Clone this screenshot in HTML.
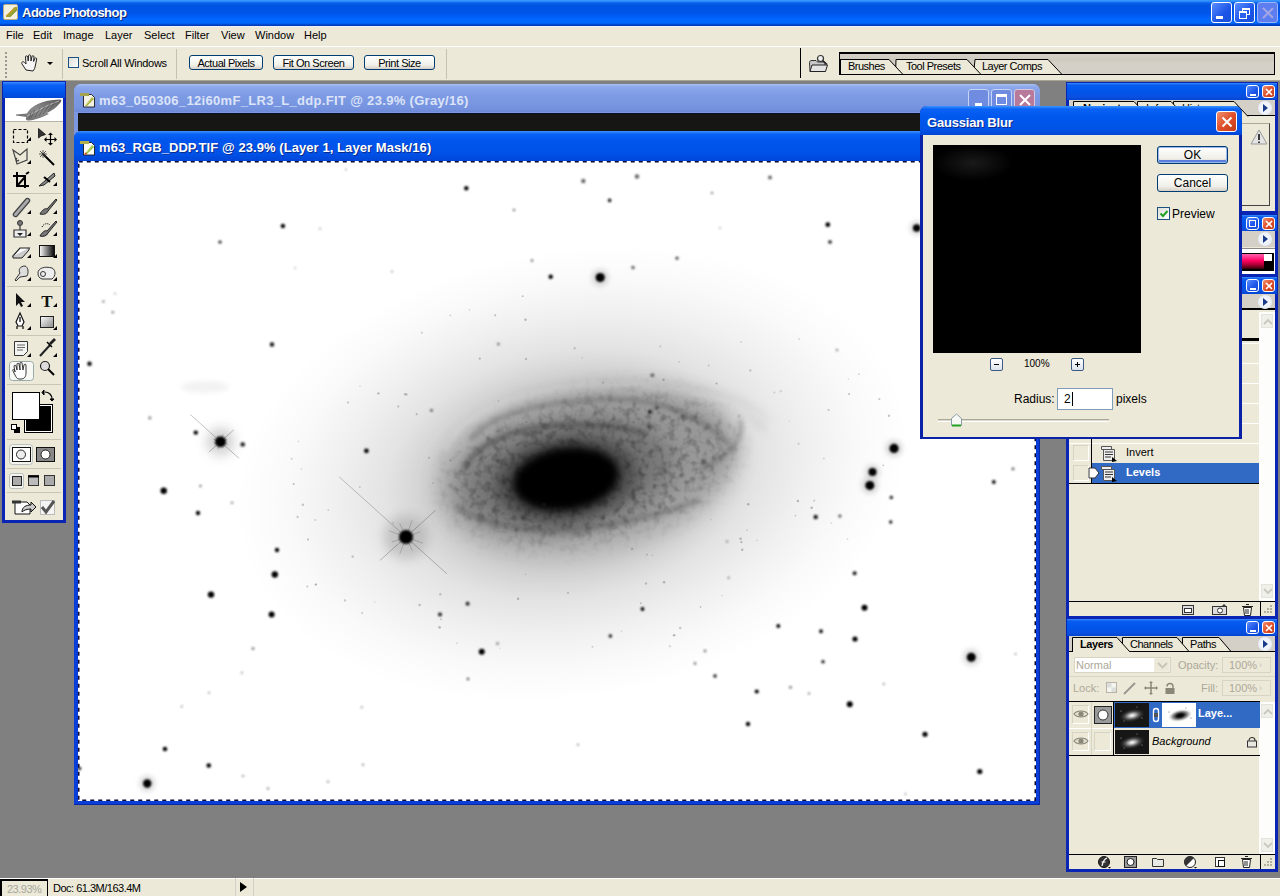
<!DOCTYPE html>
<html><head><meta charset="utf-8">
<style>
*{box-sizing:border-box}
html,body{margin:0;padding:0}
body{width:1280px;height:896px;overflow:hidden;background:#808080;position:relative;font-family:"Liberation Sans",sans-serif;font-size:11px;color:#000}
.a{position:absolute}
.tb{background:linear-gradient(#3d9dff 0,#2a86f8 1.5px,#0860e8 3px,#0054e3 6px,#0054e6 12px,#005cf4 16px,#0066ff 19px,#0068ff 23px,#0040c0 25px,#0038b0 26px)}
.menu span{position:absolute;top:29px}
.xbtn{position:absolute;border:1px solid #fff;border-radius:3px;background:linear-gradient(135deg,#5a8cff,#1b55e8 60%,#1a4fd8)}
.xclose{position:absolute;border:1px solid #fff;border-radius:3px;background:linear-gradient(135deg,#f09070,#e0502a 50%,#c03a18)}
.btn{position:absolute;border:1px solid #003c74;border-radius:3px;background:linear-gradient(#fff,#f0f0ea 70%,#d6d0c5);text-align:center;font-size:11px;line-height:14px;letter-spacing:-0.45px}
.ptitle{position:absolute;background:linear-gradient(#3b8cff 0,#0a5cf0 2px,#0055ea 8px,#0a4fe0 14px,#0046d0 17px)}
.tab{position:absolute;font-size:11px}
</style></head>
<body>
<!-- app title bar -->
<div class="a tb" style="left:0;top:0;width:1280px;height:26px"></div>
<div class="a" style="left:3px;top:4px;width:15px;height:16px;background:#f4f0e0;border-radius:2px;border:1px solid #b9b08a"></div>
<div class="a" style="left:6px;top:7px;width:11px;height:10px;background:linear-gradient(135deg,transparent 40%,#c9a12a 41%,#7ba13a 70%,transparent 71%)"></div>
<div class="a" style="left:22px;top:5px;font-weight:bold;font-size:13px;color:#fff;letter-spacing:-0.5px;text-shadow:1px 1px #0a246a">Adobe Photoshop</div>
<div class="xbtn" style="left:1211px;top:2px;width:21px;height:21px"><div class="a" style="left:4px;top:13px;width:7px;height:3px;background:#fff"></div></div>
<div class="xbtn" style="left:1234px;top:2px;width:21px;height:21px"><div class="a" style="left:7px;top:5px;width:8px;height:7px;border:1px solid #fff;border-top-width:2px"></div><div class="a" style="left:4px;top:8px;width:8px;height:8px;border:1px solid #fff;border-top-width:2px;background:#2a62ee"></div></div>
<div class="xbtn" style="left:1257px;top:2px;width:21px;height:21px;background:#5e7ef0;border-color:#9cb4f8"><div class="a" style="left:9px;top:3px;width:1.5px;height:14px;background:#a6a8e6;transform:rotate(45deg)"></div><div class="a" style="left:9px;top:3px;width:1.5px;height:14px;background:#a6a8e6;transform:rotate(-45deg)"></div></div>

<!-- menu bar -->
<div class="a" style="left:0;top:26px;width:1280px;height:21px;background:#ece9d8;border-bottom:1px solid #c4c1b4;border-top:1px solid #f0f0fa"></div>
<div class="a" style="left:0;top:46px;width:1280px;height:1px;background:#fff"></div>
<div class="menu">
<span style="left:6px">File</span><span style="left:33px">Edit</span><span style="left:63px">Image</span><span style="left:105px">Layer</span><span style="left:144px">Select</span><span style="left:185px">Filter</span><span style="left:221px">View</span><span style="left:255px">Window</span><span style="left:304px">Help</span>
</div>

<!-- options bar -->
<div class="a" style="left:0;top:47px;width:1280px;height:34px;background:#ece9d8;border-bottom:1px solid #a9a595"></div>
<svg class="a" style="left:4px;top:51px" width="6" height="28"><g fill="#9a9890"><rect x="1" y="1" width="2" height="2"/><rect x="1" y="5" width="2" height="2"/><rect x="1" y="9" width="2" height="2"/><rect x="1" y="13" width="2" height="2"/><rect x="1" y="17" width="2" height="2"/><rect x="1" y="21" width="2" height="2"/><rect x="1" y="25" width="2" height="2"/></g></svg>
<svg class="a" style="left:20px;top:54px" width="20" height="18" viewBox="0 0 20 18"><path d="M6 16 L2 10 C1 8 3 7 4.5 8.5 L6 10 L5.5 3 C5.5 1.5 7.5 1.5 7.8 3 L8.2 7 L8.5 1.8 C8.6 0.5 10.6 0.5 10.7 1.8 L11 7 L12 2.5 C12.3 1.2 14.2 1.5 14 3 L13.6 7.5 L14.8 4.5 C15.2 3.4 16.9 3.8 16.7 5 L15.5 11 C15 14 14 16 13 17 Z" fill="#f4f4f4" stroke="#222" stroke-width="1"/></svg>
<svg class="a" style="left:808px;top:54px" width="22" height="20" viewBox="0 0 22 20"><path d="M1.5 8.5 C1.5 7 2.5 6.5 4 6.5 H8 L9.5 8 H17 V17.5 H2 Z" fill="#c8c8c8" stroke="#333"/><path d="M2 17.5 L4 11 H19.5 L17.5 17.5 Z" fill="#e4e4e4" stroke="#222"/><circle cx="12.5" cy="4.5" r="3" fill="#eee" stroke="#333" stroke-width="1.2"/><path d="M14.5 6.5 L19 10.5" stroke="#222" stroke-width="1.6"/></svg>
<div class="a" style="left:62px;top:49px;width:1px;height:30px;background:#c5c2b2"></div>
<div class="a" style="left:176px;top:49px;width:1px;height:30px;background:#c5c2b2"></div>
<div class="a" style="left:446px;top:49px;width:1px;height:30px;background:#c5c2b2"></div>
<div class="a" style="left:800px;top:48px;width:1px;height:30px;background:#000"></div>
<div class="a" style="left:68px;top:57px;width:11px;height:11px;border:1px solid #1c5180;background:linear-gradient(135deg,#dcdcd7,#fff)"></div>
<div class="a" style="left:82px;top:57px;letter-spacing:-0.28px">Scroll All Windows</div>
<div class="btn" style="left:189px;top:55px;width:74px;height:15px">Actual Pixels</div>
<div class="btn" style="left:273px;top:55px;width:81px;height:15px">Fit On Screen</div>
<div class="btn" style="left:364px;top:55px;width:71px;height:15px">Print Size</div>
<div class="a" style="left:47px;top:62px;width:0;height:0;border-left:3px solid transparent;border-right:3px solid transparent;border-top:3px solid #000"></div>

<!-- palette well -->
<div class="a" style="left:839px;top:52px;width:436px;height:23px;background:linear-gradient(#d4d0c8,#cdc9bd 6px,#d4d0c8 8px);border:1px solid #000;border-top-width:2px"></div>
<svg class="a" style="left:838px;top:58px" width="230" height="18" viewBox="838 58 230 18">
<path d="M973.5 74.5 L975 59.5 H1048 L1062 74.5" fill="#ece9d8" stroke="#000"/>
<path d="M895.5 74.5 L896 59.5 H967 L981 74.5" fill="#ece9d8" stroke="#000"/>
<path d="M839.5 74.5 V59.5 H889 L903 74.5" fill="#ece9d8" stroke="#000"/>
<path d="M839.5 74.5 H1062" stroke="#000"/>
<path d="M840 59 V75" stroke="#000" stroke-width="2"/>
</svg>
<div class="a" style="left:848px;top:60px;letter-spacing:-0.5px">Brushes</div>
<div class="a" style="left:906px;top:60px;letter-spacing:-0.5px">Tool Presets</div>
<div class="a" style="left:982px;top:60px;letter-spacing:-0.5px">Layer Comps</div>

<!-- status bar -->
<div class="a" style="left:0;top:878px;width:1280px;height:18px;background:#ece9d8;border-top:1px solid #fff"></div>
<div class="a" style="left:0;top:879px;width:48px;height:17px;border:2px solid #000;border-bottom:0;border-right-width:1px;color:#a7a59a;padding:2px 0 0 5px;font-size:11px;letter-spacing:-0.5px">23.93%</div>
<div class="a" style="left:53px;top:882px;letter-spacing:-0.5px">Doc: 61.3M/163.4M</div>
<div class="a" style="left:235px;top:878px;width:1px;height:18px;background:#d4d0c8"></div>
<div class="a" style="left:253px;top:878px;width:1px;height:18px;background:#d4d0c8"></div>
<div class="a" style="left:240px;top:882px;width:0;height:0;border-top:5px solid transparent;border-bottom:5px solid transparent;border-left:7px solid #000"></div>



<!-- doc window 1 inactive -->
<div class="a" style="left:74px;top:84px;width:966px;height:60px;background:#7b97e0;border-radius:7px 7px 0 0"></div>
<div class="a" style="left:74px;top:84px;width:966px;height:28px;border-radius:7px 7px 0 0;background:linear-gradient(#a9c0f0 0,#8ba8ec 3px,#7d9ae4 12px,#7693e0 24px,#6f8bd8 28px)"></div>
<div class="a" style="left:78px;top:113px;width:958px;height:18px;background:#161614;border-top:1px solid #08102a"></div>
<svg class="a" style="left:80px;top:91px" width="16" height="17" viewBox="0 0 16 17"><path d="M3.5 3.5h8l3 3v9.5h-11z" fill="#f4f2e4" stroke="#1a1a20" stroke-width="0.9"/><path d="M0 2h9v3h-9z" fill="#a4a450"/><path d="M5 15 L12 6 L14 8 L7 15z" fill="#a8b040"/><path d="M6 14 L12.5 7" stroke="#c8d060" stroke-width="0.8"/></svg>
<div class="a" style="left:99px;top:93px;font-weight:bold;font-size:13px;color:#dce4f8;letter-spacing:0.32px">m63_050306_12i60mF_LR3_L_ddp.FIT @ 23.9% (Gray/16)</div>
<div class="a" style="left:968px;top:89px;width:21px;height:21px;border:1px solid #c8d4f4;border-radius:3px;background:#6f8ce0"><div class="a" style="left:6px;top:13px;width:7px;height:3px;background:#fff"></div></div>
<div class="a" style="left:991px;top:89px;width:21px;height:21px;border:1px solid #c8d4f4;border-radius:3px;background:#6f8ce0"><div class="a" style="left:4px;top:4px;width:11px;height:11px;border:1.5px solid #fff;border-top-width:3px"></div></div>
<div class="a" style="left:1014px;top:89px;width:21px;height:21px;border:1px solid #d8c8e0;border-radius:3px;background:#b87a9a"><svg class="a" style="left:3px;top:3px" width="14" height="14"><path d="M2 2L12 12M12 2L2 12" stroke="#fff" stroke-width="2"/></svg></div>

<!-- doc window 2 active -->
<div class="a" style="left:74px;top:131px;width:966px;height:674px;background:#0a3ed8;border-radius:7px 7px 0 0;box-shadow:inset -1px -1px 0 #0628a0"></div>
<div class="a" style="left:74px;top:131px;width:966px;height:30px;border-radius:7px 7px 0 0;background:linear-gradient(#3d95ff 0,#0a62f5 3px,#0055ec 10px,#0052e8 22px,#0046d8 30px)"></div>
<svg class="a" style="left:80px;top:139px" width="16" height="17" viewBox="0 0 16 17"><path d="M3.5 3.5h8l3 3v9.5h-11z" fill="#fafaf4" stroke="#1a1a20" stroke-width="0.9"/><path d="M0 2h9v3h-9z" fill="#b0b050"/><path d="M5 15 L12 6 L14 8 L7 15z" fill="#8cc040"/><path d="M6 14 L12.5 7" stroke="#d0e070" stroke-width="0.8"/><path d="M4 15.5 L6 13 L7 15.5z" fill="#e04020"/></svg>
<div class="a" style="left:99px;top:140px;font-weight:bold;font-size:13px;color:#fff;letter-spacing:0.07px;text-shadow:1px 1px #0a2a8a">m63_RGB_DDP.TIF @ 23.9% (Layer 1, Layer Mask/16)</div>
<div id="canvas" class="a" style="left:78px;top:161px;width:958px;height:640px;background:#fff;overflow:hidden"></div>
<!--GALAXY-->
<svg class="a" style="left:78px;top:161px" width="958" height="640" viewBox="78 161 958 640">
<defs>
<filter id="b50" x="-50%" y="-50%" width="200%" height="200%"><feGaussianBlur stdDeviation="45"/></filter>
<filter id="b25" x="-50%" y="-50%" width="200%" height="200%"><feGaussianBlur stdDeviation="22"/></filter>
<filter id="b12" x="-50%" y="-50%" width="200%" height="200%"><feGaussianBlur stdDeviation="11"/></filter>
<filter id="b6" x="-50%" y="-50%" width="200%" height="200%"><feGaussianBlur stdDeviation="6"/></filter>
<filter id="b4" x="-50%" y="-50%" width="200%" height="200%"><feGaussianBlur stdDeviation="4"/></filter>
<filter id="b3" x="-50%" y="-50%" width="200%" height="200%"><feGaussianBlur stdDeviation="2.5"/></filter>
<filter id="b1" x="-50%" y="-50%" width="200%" height="200%"><feGaussianBlur stdDeviation="0.9"/></filter>
<filter id="bs" x="-100%" y="-100%" width="300%" height="300%"><feGaussianBlur stdDeviation="0.7"/></filter>
</defs>
<defs><radialGradient id="halo" cx="0.5" cy="0.5" r="0.5">
<stop offset="0" stop-color="#000" stop-opacity="0.32"/>
<stop offset="0.4" stop-color="#000" stop-opacity="0.2"/>
<stop offset="0.55" stop-color="#000" stop-opacity="0.11"/>
<stop offset="0.7" stop-color="#000" stop-opacity="0.06"/>
<stop offset="0.85" stop-color="#000" stop-opacity="0.022"/>
<stop offset="1" stop-color="#000" stop-opacity="0"/>
</radialGradient></defs>
<ellipse cx="572" cy="474" rx="340" ry="225" transform="rotate(-10 572 474)" fill="url(#halo)"/>
<ellipse cx="205" cy="387" rx="24" ry="6" fill="#f2f2f2" filter="url(#b3)"/>
<ellipse cx="588" cy="470" rx="150" ry="82" transform="rotate(-11 588 470)" fill="#b0b0b0" filter="url(#b12)"/>
<ellipse cx="590" cy="466" rx="145" ry="66" transform="rotate(-11 590 466)" fill="#989898" filter="url(#b12)"/>
<ellipse cx="568" cy="475" rx="105" ry="54" transform="rotate(-10 568 475)" fill="#747474" filter="url(#b12)"/>
<ellipse cx="566" cy="479" rx="72" ry="44" transform="rotate(-8 568 477)" fill="#333" opacity="0.55" filter="url(#b6)"/>
<defs><filter id="turb" x="0" y="0" width="100%" height="100%"><feTurbulence type="fractalNoise" baseFrequency="0.13" numOctaves="2" seed="3"/><feColorMatrix type="matrix" values="0 0 0 0 0  0 0 0 0 0  0 0 0 0 0  1.8 0 0 0 -0.8"/></filter>
<filter id="mb" x="-50%" y="-50%" width="200%" height="200%"><feGaussianBlur stdDeviation="14"/></filter>
<mask id="dm"><ellipse cx="590" cy="468" rx="145" ry="70" transform="rotate(-11 590 466)" fill="#fff" filter="url(#mb)"/></mask></defs>
<g mask="url(#dm)" opacity="0.38"><rect x="420" y="370" width="340" height="200" filter="url(#turb)"/></g>
<ellipse cx="566" cy="479" rx="54" ry="32" transform="rotate(-8 566 479)" fill="#000" filter="url(#b4)"/>
<path d="M 440 470 C 455 415 560 385 660 388 C 725 392 760 410 765 430" fill="none" stroke="#aaa" stroke-width="10" opacity="0.35" filter="url(#b6)"/>
<path d="M 464 471 C 470 450 505 430 542 427 C 580 422 620 425 646 434" fill="none" stroke="#2a2a2a" stroke-width="5" opacity="0.45" filter="url(#b3)"/>
<path d="M 470 440 C 490 415 540 400 614 399 C 660 399 700 415 730 445" fill="none" stroke="#333" stroke-width="4" opacity="0.35" filter="url(#b3)"/>
<path d="M 455 505 C 480 525 530 532 567 530 C 610 527 660 515 700 500" fill="none" stroke="#3a3a3a" stroke-width="5" opacity="0.35" filter="url(#b3)"/>
<path d="M 445 450 C 470 400 560 380 640 385 C 700 390 750 405 775 430" fill="none" stroke="#fff" stroke-width="5" opacity="0.18" filter="url(#b3)"/>
<path d="M 700 470 C 730 455 745 440 740 420" fill="none" stroke="#333" stroke-width="4" opacity="0.3" filter="url(#b3)"/>
<circle cx="560.4" cy="507.7" r="1.8" fill="#222" opacity="0.28" filter="url(#b1)"/>
<circle cx="496.5" cy="474.3" r="1.1" fill="#222" opacity="0.43" filter="url(#b1)"/>
<circle cx="688.0" cy="461.9" r="1.1" fill="#222" opacity="0.28" filter="url(#b1)"/>
<circle cx="482.7" cy="514.9" r="1.1" fill="#222" opacity="0.33" filter="url(#b1)"/>
<circle cx="488.5" cy="439.0" r="1.7" fill="#222" opacity="0.39" filter="url(#b1)"/>
<circle cx="660.5" cy="450.4" r="2.0" fill="#222" opacity="0.35" filter="url(#b1)"/>
<circle cx="642.6" cy="488.2" r="1.4" fill="#222" opacity="0.54" filter="url(#b1)"/>
<circle cx="644.2" cy="506.5" r="1.8" fill="#222" opacity="0.38" filter="url(#b1)"/>
<circle cx="518.2" cy="470.1" r="1.1" fill="#222" opacity="0.32" filter="url(#b1)"/>
<circle cx="540.9" cy="433.3" r="1.4" fill="#222" opacity="0.45" filter="url(#b1)"/>
<circle cx="506.4" cy="495.4" r="2.0" fill="#222" opacity="0.49" filter="url(#b1)"/>
<circle cx="603.0" cy="518.4" r="1.6" fill="#222" opacity="0.56" filter="url(#b1)"/>
<circle cx="571.2" cy="428.5" r="2.2" fill="#222" opacity="0.29" filter="url(#b1)"/>
<circle cx="489.5" cy="514.7" r="1.2" fill="#222" opacity="0.42" filter="url(#b1)"/>
<circle cx="703.9" cy="461.6" r="1.9" fill="#222" opacity="0.45" filter="url(#b1)"/>
<circle cx="648.9" cy="426.6" r="1.8" fill="#222" opacity="0.46" filter="url(#b1)"/>
<circle cx="498.0" cy="460.7" r="2.0" fill="#222" opacity="0.58" filter="url(#b1)"/>
<circle cx="478.3" cy="496.7" r="1.1" fill="#222" opacity="0.50" filter="url(#b1)"/>
<circle cx="498.1" cy="430.9" r="2.0" fill="#222" opacity="0.35" filter="url(#b1)"/>
<circle cx="509.6" cy="518.9" r="1.0" fill="#222" opacity="0.41" filter="url(#b1)"/>
<circle cx="633.5" cy="492.9" r="1.1" fill="#222" opacity="0.52" filter="url(#b1)"/>
<circle cx="654.3" cy="487.0" r="1.5" fill="#222" opacity="0.55" filter="url(#b1)"/>
<circle cx="681.4" cy="475.4" r="1.7" fill="#222" opacity="0.56" filter="url(#b1)"/>
<circle cx="634.5" cy="403.5" r="1.3" fill="#222" opacity="0.40" filter="url(#b1)"/>
<circle cx="516.4" cy="529.9" r="2.1" fill="#222" opacity="0.30" filter="url(#b1)"/>
<circle cx="634.3" cy="497.1" r="1.3" fill="#222" opacity="0.42" filter="url(#b1)"/>
<circle cx="512.4" cy="459.2" r="1.0" fill="#222" opacity="0.40" filter="url(#b1)"/>
<circle cx="523.0" cy="518.2" r="2.1" fill="#222" opacity="0.49" filter="url(#b1)"/>
<circle cx="478.1" cy="482.5" r="1.8" fill="#222" opacity="0.27" filter="url(#b1)"/>
<circle cx="683.0" cy="416.4" r="2.0" fill="#222" opacity="0.53" filter="url(#b1)"/>
<circle cx="519.8" cy="509.7" r="1.1" fill="#222" opacity="0.47" filter="url(#b1)"/>
<circle cx="660.4" cy="469.2" r="1.3" fill="#222" opacity="0.31" filter="url(#b1)"/>
<circle cx="556.2" cy="503.7" r="1.0" fill="#222" opacity="0.30" filter="url(#b1)"/>
<circle cx="670.2" cy="481.1" r="1.0" fill="#222" opacity="0.56" filter="url(#b1)"/>
<circle cx="526.0" cy="454.0" r="1.3" fill="#222" opacity="0.37" filter="url(#b1)"/>
<circle cx="544.0" cy="504.5" r="2.0" fill="#222" opacity="0.60" filter="url(#b1)"/>
<circle cx="491.8" cy="495.9" r="1.1" fill="#222" opacity="0.29" filter="url(#b1)"/>
<circle cx="548.1" cy="510.8" r="2.0" fill="#222" opacity="0.31" filter="url(#b1)"/>
<circle cx="724.7" cy="453.7" r="1.6" fill="#222" opacity="0.30" filter="url(#b1)"/>
<circle cx="520.2" cy="471.1" r="1.6" fill="#222" opacity="0.59" filter="url(#b1)"/>
<circle cx="659.0" cy="412.8" r="1.3" fill="#222" opacity="0.38" filter="url(#b1)"/>
<circle cx="659.6" cy="507.2" r="1.6" fill="#222" opacity="0.52" filter="url(#b1)"/>
<circle cx="555.7" cy="510.0" r="2.0" fill="#222" opacity="0.59" filter="url(#b1)"/>
<circle cx="656.6" cy="407.9" r="2.0" fill="#222" opacity="0.51" filter="url(#b1)"/>
<circle cx="613.8" cy="514.1" r="1.4" fill="#222" opacity="0.26" filter="url(#b1)"/>
<circle cx="352.7" cy="556.6" r="1.3" fill="#555" opacity="0.27" filter="url(#bs)"/>
<circle cx="328.3" cy="510.1" r="0.9" fill="#555" opacity="0.28" filter="url(#bs)"/>
<circle cx="360.0" cy="386.0" r="0.8" fill="#555" opacity="0.23" filter="url(#bs)"/>
<circle cx="831.3" cy="523.0" r="1.1" fill="#555" opacity="0.16" filter="url(#bs)"/>
<circle cx="879.3" cy="399.2" r="1.1" fill="#555" opacity="0.30" filter="url(#bs)"/>
<circle cx="625.8" cy="505.9" r="1.1" fill="#555" opacity="0.16" filter="url(#bs)"/>
<circle cx="652.4" cy="555.3" r="0.8" fill="#555" opacity="0.27" filter="url(#bs)"/>
<circle cx="315.6" cy="584.7" r="1.1" fill="#555" opacity="0.31" filter="url(#bs)"/>
<circle cx="315.3" cy="520.0" r="1.0" fill="#555" opacity="0.22" filter="url(#bs)"/>
<circle cx="889.0" cy="415.8" r="1.2" fill="#555" opacity="0.33" filter="url(#bs)"/>
<circle cx="525.6" cy="574.3" r="0.9" fill="#555" opacity="0.17" filter="url(#bs)"/>
<circle cx="574.6" cy="348.2" r="1.2" fill="#555" opacity="0.25" filter="url(#bs)"/>
<circle cx="848.4" cy="379.3" r="0.8" fill="#555" opacity="0.20" filter="url(#bs)"/>
<circle cx="750.3" cy="370.5" r="1.3" fill="#555" opacity="0.25" filter="url(#bs)"/>
<circle cx="814.2" cy="500.6" r="1.2" fill="#555" opacity="0.22" filter="url(#bs)"/>
<circle cx="748.2" cy="504.2" r="1.3" fill="#555" opacity="0.34" filter="url(#bs)"/>
<circle cx="710.8" cy="519.5" r="0.9" fill="#555" opacity="0.16" filter="url(#bs)"/>
<circle cx="603.2" cy="382.7" r="1.1" fill="#555" opacity="0.26" filter="url(#bs)"/>
<circle cx="700.6" cy="607.0" r="0.9" fill="#555" opacity="0.31" filter="url(#bs)"/>
<circle cx="747.0" cy="530.2" r="0.9" fill="#555" opacity="0.22" filter="url(#bs)"/>
<circle cx="849.1" cy="394.1" r="1.0" fill="#555" opacity="0.37" filter="url(#bs)"/>
<circle cx="646.0" cy="583.4" r="1.2" fill="#555" opacity="0.31" filter="url(#bs)"/>
<circle cx="847.6" cy="539.1" r="0.9" fill="#555" opacity="0.21" filter="url(#bs)"/>
<circle cx="582.3" cy="357.7" r="0.9" fill="#555" opacity="0.17" filter="url(#bs)"/>
<circle cx="795.4" cy="515.6" r="0.9" fill="#555" opacity="0.30" filter="url(#bs)"/>
<circle cx="440.3" cy="594.3" r="1.3" fill="#555" opacity="0.27" filter="url(#bs)"/>
<circle cx="298.3" cy="441.4" r="0.9" fill="#555" opacity="0.19" filter="url(#bs)"/>
<circle cx="799.1" cy="339.0" r="0.9" fill="#555" opacity="0.20" filter="url(#bs)"/>
<circle cx="522.7" cy="296.2" r="0.9" fill="#555" opacity="0.39" filter="url(#bs)"/>
<circle cx="741.1" cy="342.0" r="1.0" fill="#555" opacity="0.18" filter="url(#bs)"/>
<circle cx="883.2" cy="465.3" r="0.9" fill="#555" opacity="0.33" filter="url(#bs)"/>
<circle cx="592.5" cy="646.8" r="1.1" fill="#555" opacity="0.22" filter="url(#bs)"/>
<circle cx="722.2" cy="595.6" r="0.8" fill="#555" opacity="0.21" filter="url(#bs)"/>
<circle cx="291.7" cy="458.8" r="1.1" fill="#555" opacity="0.22" filter="url(#bs)"/>
<circle cx="702.0" cy="404.3" r="0.8" fill="#555" opacity="0.22" filter="url(#bs)"/>
<circle cx="481.3" cy="511.7" r="0.9" fill="#555" opacity="0.24" filter="url(#bs)"/>
<circle cx="450.4" cy="460.6" r="1.0" fill="#555" opacity="0.37" filter="url(#bs)"/>
<circle cx="828.5" cy="409.9" r="1.1" fill="#555" opacity="0.30" filter="url(#bs)"/>
<circle cx="640.2" cy="505.5" r="0.8" fill="#555" opacity="0.38" filter="url(#bs)"/>
<circle cx="450.3" cy="315.4" r="0.8" fill="#555" opacity="0.31" filter="url(#bs)"/>
<circle cx="308.0" cy="539.6" r="1.0" fill="#555" opacity="0.40" filter="url(#bs)"/>
<circle cx="797.9" cy="501.0" r="1.2" fill="#555" opacity="0.38" filter="url(#bs)"/>
<circle cx="525.5" cy="319.7" r="1.2" fill="#555" opacity="0.38" filter="url(#bs)"/>
<circle cx="439.6" cy="627.4" r="1.3" fill="#555" opacity="0.37" filter="url(#bs)"/>
<circle cx="345.0" cy="600.4" r="1.2" fill="#555" opacity="0.29" filter="url(#bs)"/>
<circle cx="416.7" cy="414.2" r="1.1" fill="#555" opacity="0.30" filter="url(#bs)"/>
<circle cx="811.7" cy="507.8" r="1.3" fill="#555" opacity="0.37" filter="url(#bs)"/>
<circle cx="526.0" cy="358.9" r="1.2" fill="#555" opacity="0.30" filter="url(#bs)"/>
<circle cx="316.2" cy="584.4" r="0.8" fill="#555" opacity="0.34" filter="url(#bs)"/>
<circle cx="823.9" cy="458.4" r="1.0" fill="#555" opacity="0.21" filter="url(#bs)"/>
<circle cx="479.8" cy="358.6" r="1.1" fill="#555" opacity="0.38" filter="url(#bs)"/>
<circle cx="580.3" cy="520.6" r="1.0" fill="#555" opacity="0.32" filter="url(#bs)"/>
<circle cx="632.0" cy="548.7" r="1.3" fill="#555" opacity="0.31" filter="url(#bs)"/>
<circle cx="307.3" cy="586.4" r="1.0" fill="#555" opacity="0.32" filter="url(#bs)"/>
<circle cx="664.1" cy="582.3" r="1.2" fill="#555" opacity="0.38" filter="url(#bs)"/>
<circle cx="708.7" cy="365.5" r="1.1" fill="#555" opacity="0.23" filter="url(#bs)"/>
<circle cx="742.2" cy="549.7" r="1.2" fill="#555" opacity="0.36" filter="url(#bs)"/>
<circle cx="469.5" cy="309.9" r="0.9" fill="#555" opacity="0.19" filter="url(#bs)"/>
<circle cx="413.1" cy="535.4" r="0.9" fill="#555" opacity="0.25" filter="url(#bs)"/>
<circle cx="398.3" cy="406.4" r="1.0" fill="#555" opacity="0.36" filter="url(#bs)"/>
<circle cx="789.3" cy="421.2" r="0.8" fill="#555" opacity="0.16" filter="url(#bs)"/>
<circle cx="633.6" cy="422.3" r="1.2" fill="#555" opacity="0.29" filter="url(#bs)"/>
<circle cx="500.2" cy="648.2" r="0.8" fill="#555" opacity="0.18" filter="url(#bs)"/>
<circle cx="495.5" cy="502.7" r="1.2" fill="#555" opacity="0.21" filter="url(#bs)"/>
<circle cx="644.2" cy="507.7" r="1.1" fill="#555" opacity="0.26" filter="url(#bs)"/>
<circle cx="378.4" cy="393.4" r="1.2" fill="#555" opacity="0.39" filter="url(#bs)"/>
<circle cx="498.5" cy="401.0" r="1.0" fill="#555" opacity="0.19" filter="url(#bs)"/>
<circle cx="798.6" cy="443.8" r="1.2" fill="#555" opacity="0.19" filter="url(#bs)"/>
<circle cx="568.0" cy="592.8" r="1.1" fill="#555" opacity="0.28" filter="url(#bs)"/>
<circle cx="348.1" cy="402.6" r="1.0" fill="#555" opacity="0.35" filter="url(#bs)"/>
<circle cx="663.8" cy="419.3" r="1.3" fill="#555" opacity="0.33" filter="url(#bs)"/>
<circle cx="741.4" cy="542.1" r="1.1" fill="#555" opacity="0.38" filter="url(#bs)"/>
<circle cx="419.6" cy="605.0" r="1.2" fill="#555" opacity="0.35" filter="url(#bs)"/>
<circle cx="774.4" cy="392.5" r="1.1" fill="#555" opacity="0.20" filter="url(#bs)"/>
<circle cx="495.2" cy="315.3" r="1.1" fill="#555" opacity="0.33" filter="url(#bs)"/>
<circle cx="674.1" cy="635.2" r="1.3" fill="#555" opacity="0.39" filter="url(#bs)"/>
<circle cx="293.7" cy="483.9" r="1.0" fill="#555" opacity="0.38" filter="url(#bs)"/>
<circle cx="679.0" cy="361.9" r="0.8" fill="#555" opacity="0.26" filter="url(#bs)"/>
<circle cx="301.4" cy="469.3" r="1.0" fill="#555" opacity="0.16" filter="url(#bs)"/>
<circle cx="602.9" cy="409.2" r="1.2" fill="#555" opacity="0.19" filter="url(#bs)"/>
<circle cx="457.0" cy="643.2" r="0.9" fill="#555" opacity="0.19" filter="url(#bs)"/>
<circle cx="302.9" cy="504.8" r="1.2" fill="#555" opacity="0.32" filter="url(#bs)"/>
<circle cx="780.8" cy="391.3" r="1.3" fill="#555" opacity="0.17" filter="url(#bs)"/>
<circle cx="640.8" cy="603.2" r="0.9" fill="#555" opacity="0.33" filter="url(#bs)"/>
<circle cx="406.5" cy="394.4" r="1.2" fill="#555" opacity="0.29" filter="url(#bs)"/>
<circle cx="518.1" cy="598.7" r="1.2" fill="#555" opacity="0.38" filter="url(#bs)"/>
<circle cx="680.2" cy="628.1" r="1.3" fill="#555" opacity="0.28" filter="url(#bs)"/>
<circle cx="429.1" cy="457.8" r="1.1" fill="#555" opacity="0.28" filter="url(#bs)"/>
<circle cx="500.7" cy="454.4" r="1.3" fill="#555" opacity="0.28" filter="url(#bs)"/>
<circle cx="362.2" cy="613.1" r="1.1" fill="#555" opacity="0.27" filter="url(#bs)"/>
<circle cx="526.4" cy="422.2" r="1.1" fill="#555" opacity="0.25" filter="url(#bs)"/>
<circle cx="858.9" cy="374.2" r="0.9" fill="#555" opacity="0.27" filter="url(#bs)"/>
<circle cx="740.6" cy="538.7" r="1.2" fill="#555" opacity="0.38" filter="url(#bs)"/>
<circle cx="393.1" cy="522.9" r="0.9" fill="#555" opacity="0.30" filter="url(#bs)"/>
<circle cx="685.7" cy="418.2" r="1.2" fill="#555" opacity="0.16" filter="url(#bs)"/>
<circle cx="646.9" cy="554.7" r="1.1" fill="#555" opacity="0.23" filter="url(#bs)"/>
<circle cx="441.0" cy="619.3" r="0.9" fill="#555" opacity="0.33" filter="url(#bs)"/>
<circle cx="757.1" cy="540.3" r="0.9" fill="#555" opacity="0.20" filter="url(#bs)"/>
<circle cx="359.8" cy="487.0" r="1.0" fill="#555" opacity="0.25" filter="url(#bs)"/>
<circle cx="433.1" cy="483.1" r="0.9" fill="#555" opacity="0.31" filter="url(#bs)"/>
<circle cx="405.1" cy="394.3" r="1.2" fill="#555" opacity="0.30" filter="url(#bs)"/>
<circle cx="663.5" cy="379.7" r="1.2" fill="#555" opacity="0.35" filter="url(#bs)"/>
<circle cx="716.5" cy="383.5" r="1.0" fill="#555" opacity="0.38" filter="url(#bs)"/>
<circle cx="669.9" cy="646.2" r="1.2" fill="#555" opacity="0.18" filter="url(#bs)"/>
<circle cx="621.5" cy="631.4" r="0.9" fill="#555" opacity="0.17" filter="url(#bs)"/>
<circle cx="660.2" cy="346.4" r="1.2" fill="#555" opacity="0.18" filter="url(#bs)"/>
<circle cx="374.7" cy="602.0" r="0.8" fill="#555" opacity="0.20" filter="url(#bs)"/>
<circle cx="421.9" cy="332.8" r="1.3" fill="#555" opacity="0.18" filter="url(#bs)"/>
<circle cx="297.6" cy="516.9" r="1.1" fill="#555" opacity="0.32" filter="url(#bs)"/>
<circle cx="625.8" cy="526.3" r="0.9" fill="#555" opacity="0.16" filter="url(#bs)"/>
<defs><filter id="b2" x="-50%" y="-50%" width="200%" height="200%"><feGaussianBlur stdDeviation="1.2"/></filter></defs>
<circle cx="406" cy="537" r="22" fill="#999" opacity="0.45" filter="url(#b6)"/>
<line x1="406" y1="537" x2="446.9" y2="573.8" stroke="#444" stroke-width="1" opacity="0.35" filter="url(#bs)"/>
<line x1="406" y1="537" x2="380.0" y2="560.4" stroke="#444" stroke-width="1" opacity="0.35" filter="url(#bs)"/>
<line x1="406" y1="537" x2="339.1" y2="476.8" stroke="#444" stroke-width="1" opacity="0.3" filter="url(#bs)"/>
<line x1="406" y1="537" x2="435.7" y2="510.2" stroke="#444" stroke-width="1" opacity="0.35" filter="url(#bs)"/>
<line x1="406" y1="537" x2="428.0" y2="537.0" stroke="#444" stroke-width="1" opacity="0.3" filter="url(#bs)"/>
<line x1="406" y1="537" x2="406.0" y2="559.0" stroke="#444" stroke-width="1" opacity="0.3" filter="url(#bs)"/>
<line x1="406" y1="537" x2="384.0" y2="537.0" stroke="#444" stroke-width="1" opacity="0.3" filter="url(#bs)"/>
<line x1="406" y1="537" x2="406.0" y2="515.0" stroke="#444" stroke-width="1" opacity="0.3" filter="url(#bs)"/>
<line x1="406" y1="537" x2="422.9" y2="543.2" stroke="#444" stroke-width="1" opacity="0.25" filter="url(#bs)"/>
<line x1="406" y1="537" x2="389.1" y2="530.8" stroke="#444" stroke-width="1" opacity="0.25" filter="url(#bs)"/>
<line x1="406" y1="537" x2="399.8" y2="553.9" stroke="#444" stroke-width="1" opacity="0.25" filter="url(#bs)"/>
<line x1="406" y1="537" x2="412.2" y2="520.1" stroke="#444" stroke-width="1" opacity="0.25" filter="url(#bs)"/>
<line x1="406" y1="537" x2="412.3" y2="550.6" stroke="#444" stroke-width="1" opacity="0.25" filter="url(#bs)"/>
<line x1="406" y1="537" x2="391.9" y2="542.1" stroke="#444" stroke-width="1" opacity="0.25" filter="url(#bs)"/>
<line x1="406" y1="537" x2="399.7" y2="523.4" stroke="#444" stroke-width="1" opacity="0.25" filter="url(#bs)"/>
<line x1="406" y1="537" x2="420.1" y2="531.9" stroke="#444" stroke-width="1" opacity="0.25" filter="url(#bs)"/>
<circle cx="220.5" cy="441.7" r="14" fill="#999" opacity="0.45" filter="url(#b6)"/>
<line x1="220.5" y1="441.7" x2="238.9" y2="458.3" stroke="#444" stroke-width="1" opacity="0.35" filter="url(#bs)"/>
<line x1="220.5" y1="441.7" x2="208.8" y2="452.2" stroke="#444" stroke-width="1" opacity="0.35" filter="url(#bs)"/>
<line x1="220.5" y1="441.7" x2="190.4" y2="414.6" stroke="#444" stroke-width="1" opacity="0.3" filter="url(#bs)"/>
<line x1="220.5" y1="441.7" x2="233.9" y2="429.7" stroke="#444" stroke-width="1" opacity="0.35" filter="url(#bs)"/>
<line x1="220.5" y1="441.7" x2="230.4" y2="441.7" stroke="#444" stroke-width="1" opacity="0.3" filter="url(#bs)"/>
<line x1="220.5" y1="441.7" x2="220.5" y2="451.6" stroke="#444" stroke-width="1" opacity="0.3" filter="url(#bs)"/>
<line x1="220.5" y1="441.7" x2="210.6" y2="441.7" stroke="#444" stroke-width="1" opacity="0.3" filter="url(#bs)"/>
<line x1="220.5" y1="441.7" x2="220.5" y2="431.8" stroke="#444" stroke-width="1" opacity="0.3" filter="url(#bs)"/>
<line x1="220.5" y1="441.7" x2="228.1" y2="444.5" stroke="#444" stroke-width="1" opacity="0.25" filter="url(#bs)"/>
<line x1="220.5" y1="441.7" x2="212.9" y2="438.9" stroke="#444" stroke-width="1" opacity="0.25" filter="url(#bs)"/>
<line x1="220.5" y1="441.7" x2="217.7" y2="449.3" stroke="#444" stroke-width="1" opacity="0.25" filter="url(#bs)"/>
<line x1="220.5" y1="441.7" x2="223.3" y2="434.1" stroke="#444" stroke-width="1" opacity="0.25" filter="url(#bs)"/>
<line x1="220.5" y1="441.7" x2="223.4" y2="447.8" stroke="#444" stroke-width="1" opacity="0.25" filter="url(#bs)"/>
<line x1="220.5" y1="441.7" x2="214.2" y2="444.0" stroke="#444" stroke-width="1" opacity="0.25" filter="url(#bs)"/>
<line x1="220.5" y1="441.7" x2="217.6" y2="435.6" stroke="#444" stroke-width="1" opacity="0.25" filter="url(#bs)"/>
<line x1="220.5" y1="441.7" x2="226.8" y2="439.4" stroke="#444" stroke-width="1" opacity="0.25" filter="url(#bs)"/>
<circle cx="406" cy="537" r="7" fill="#000" filter="url(#b1)"/>
<circle cx="220.5" cy="441.7" r="5.5" fill="#000" filter="url(#b1)"/>
<circle cx="282.9" cy="226" r="2.2" fill="rgb(0,0,0)" filter="url(#b1)"/>
<circle cx="220" cy="242" r="1.6" fill="rgb(25,25,25)" filter="url(#b1)"/>
<circle cx="272" cy="344.5" r="2.2" fill="rgb(25,25,25)" filter="url(#b1)"/>
<circle cx="89.5" cy="363.7" r="2.2" fill="rgb(0,0,0)" filter="url(#b1)"/>
<circle cx="103.4" cy="301.6" r="1.4" fill="rgb(153,153,153)" filter="url(#b1)"/>
<circle cx="112.8" cy="312.3" r="1.3" fill="rgb(127,127,127)" filter="url(#b1)"/>
<circle cx="320" cy="228.8" r="1.2" fill="rgb(191,191,191)" filter="url(#b1)"/>
<circle cx="295" cy="268" r="1.1" fill="rgb(191,191,191)" filter="url(#b1)"/>
<circle cx="392" cy="271.6" r="1.2" fill="rgb(178,178,178)" filter="url(#b1)"/>
<circle cx="115" cy="293.6" r="1.1" fill="rgb(178,178,178)" filter="url(#b1)"/>
<circle cx="346" cy="169.6" r="1.1" fill="rgb(178,178,178)" filter="url(#b1)"/>
<circle cx="466.3" cy="188.3" r="2.2" fill="rgb(0,0,0)" filter="url(#b1)"/>
<circle cx="583.3" cy="181" r="2.2" fill="rgb(102,102,102)" filter="url(#b1)"/>
<circle cx="637" cy="176.5" r="2.2" fill="rgb(102,102,102)" filter="url(#b1)"/>
<circle cx="609.6" cy="200.4" r="1.8" fill="rgb(25,25,25)" filter="url(#b1)"/>
<circle cx="514" cy="210" r="1.3" fill="rgb(127,127,127)" filter="url(#b1)"/>
<circle cx="600.2" cy="277.5" r="8.7" fill="#999" opacity="0.35" filter="url(#b3)"/>
<circle cx="600.2" cy="277.5" r="4.6" fill="rgb(0,0,0)" filter="url(#b1)"/>
<circle cx="550.7" cy="276.7" r="2.2" fill="rgb(0,0,0)" filter="url(#b1)"/>
<circle cx="532" cy="260.6" r="1.5" fill="rgb(140,140,140)" filter="url(#b1)"/>
<circle cx="633" cy="267.6" r="1.8" fill="rgb(102,102,102)" filter="url(#b1)"/>
<circle cx="677" cy="258.2" r="1.6" fill="rgb(76,76,76)" filter="url(#b1)"/>
<circle cx="712" cy="193" r="1.2" fill="rgb(127,127,127)" filter="url(#b1)"/>
<circle cx="652.4" cy="375.2" r="2" fill="rgb(102,102,102)" filter="url(#b1)"/>
<circle cx="498.4" cy="344" r="1.5" fill="rgb(127,127,127)" filter="url(#b1)"/>
<circle cx="827.8" cy="224.7" r="2.4" fill="rgb(0,0,0)" filter="url(#b1)"/>
<circle cx="830" cy="242" r="1.8" fill="rgb(25,25,25)" filter="url(#b1)"/>
<circle cx="916.7" cy="228" r="7.2" fill="#999" opacity="0.35" filter="url(#b3)"/>
<circle cx="916.7" cy="228" r="3.8" fill="rgb(0,0,0)" filter="url(#b1)"/>
<circle cx="770" cy="177.6" r="2.0" fill="rgb(102,102,102)" filter="url(#b1)"/>
<circle cx="837" cy="350" r="1.3" fill="rgb(140,140,140)" filter="url(#b1)"/>
<circle cx="720" cy="228" r="1.1" fill="rgb(178,178,178)" filter="url(#b1)"/>
<circle cx="195.8" cy="432.6" r="2.2" fill="rgb(0,0,0)" filter="url(#b1)"/>
<circle cx="242.7" cy="444.4" r="2.2" fill="rgb(25,25,25)" filter="url(#b1)"/>
<circle cx="149.8" cy="417.9" r="1.6" fill="rgb(140,140,140)" filter="url(#b1)"/>
<circle cx="366.4" cy="450.8" r="2.4" fill="rgb(0,0,0)" filter="url(#b1)"/>
<circle cx="163.7" cy="490.7" r="3.2" fill="rgb(0,0,0)" filter="url(#b1)"/>
<circle cx="198" cy="513" r="2.2" fill="rgb(0,0,0)" filter="url(#b1)"/>
<circle cx="277" cy="550" r="2.2" fill="rgb(0,0,0)" filter="url(#b1)"/>
<circle cx="274.8" cy="574.5" r="3.2" fill="rgb(0,0,0)" filter="url(#b1)"/>
<circle cx="211" cy="594.6" r="3.2" fill="rgb(0,0,0)" filter="url(#b1)"/>
<circle cx="271.6" cy="614.4" r="3.0" fill="rgb(0,0,0)" filter="url(#b1)"/>
<circle cx="232" cy="502.8" r="1.4" fill="rgb(153,153,153)" filter="url(#b1)"/>
<circle cx="200.4" cy="486" r="1.3" fill="rgb(127,127,127)" filter="url(#b1)"/>
<circle cx="467.6" cy="603.7" r="1.9" fill="rgb(25,25,25)" filter="url(#b1)"/>
<circle cx="440" cy="614.4" r="1.9" fill="rgb(25,25,25)" filter="url(#b1)"/>
<circle cx="642.5" cy="609" r="1.9" fill="rgb(0,0,0)" filter="url(#b1)"/>
<circle cx="610.4" cy="636" r="1.8" fill="rgb(25,25,25)" filter="url(#b1)"/>
<circle cx="431.5" cy="410.4" r="1.3" fill="rgb(76,76,76)" filter="url(#b1)"/>
<circle cx="649.7" cy="411.7" r="1.8" fill="rgb(25,25,25)" filter="url(#b1)"/>
<circle cx="894" cy="448.4" r="8.7" fill="#999" opacity="0.35" filter="url(#b3)"/>
<circle cx="894" cy="448.4" r="4.6" fill="rgb(0,0,0)" filter="url(#b1)"/>
<circle cx="872.5" cy="472" r="7.6" fill="#999" opacity="0.35" filter="url(#b3)"/>
<circle cx="872.5" cy="472" r="4.0" fill="rgb(0,0,0)" filter="url(#b1)"/>
<circle cx="869.8" cy="485.4" r="8.5" fill="#999" opacity="0.35" filter="url(#b3)"/>
<circle cx="869.8" cy="485.4" r="4.5" fill="rgb(0,0,0)" filter="url(#b1)"/>
<circle cx="891.3" cy="497.4" r="1.7" fill="rgb(25,25,25)" filter="url(#b1)"/>
<circle cx="890.7" cy="522" r="1.7" fill="rgb(25,25,25)" filter="url(#b1)"/>
<circle cx="815.7" cy="517" r="2.2" fill="rgb(25,25,25)" filter="url(#b1)"/>
<circle cx="839.9" cy="516" r="1.6" fill="rgb(76,76,76)" filter="url(#b1)"/>
<circle cx="993.8" cy="482" r="2.0" fill="rgb(25,25,25)" filter="url(#b1)"/>
<circle cx="1013" cy="468.8" r="1.6" fill="rgb(114,114,114)" filter="url(#b1)"/>
<circle cx="854.6" cy="573.2" r="2.0" fill="rgb(25,25,25)" filter="url(#b1)"/>
<circle cx="864.5" cy="607.7" r="3.0" fill="rgb(0,0,0)" filter="url(#b1)"/>
<circle cx="778.3" cy="626" r="2.0" fill="rgb(0,0,0)" filter="url(#b1)"/>
<circle cx="821" cy="631.3" r="2.0" fill="rgb(25,25,25)" filter="url(#b1)"/>
<circle cx="855" cy="639" r="2.6" fill="rgb(0,0,0)" filter="url(#b1)"/>
<circle cx="739" cy="416" r="1.2" fill="rgb(153,153,153)" filter="url(#b1)"/>
<circle cx="728.7" cy="577.7" r="1.3" fill="rgb(153,153,153)" filter="url(#b1)"/>
<circle cx="727" cy="541.6" r="1.3" fill="rgb(153,153,153)" filter="url(#b1)"/>
<circle cx="147.25" cy="783.5" r="8.0" fill="#999" opacity="0.35" filter="url(#b3)"/>
<circle cx="147.25" cy="783.5" r="4.2" fill="rgb(0,0,0)" filter="url(#b1)"/>
<circle cx="165" cy="749" r="2.3" fill="rgb(0,0,0)" filter="url(#b1)"/>
<circle cx="208.75" cy="765.5" r="2.3" fill="rgb(0,0,0)" filter="url(#b1)"/>
<circle cx="253" cy="648.5" r="1.6" fill="rgb(140,140,140)" filter="url(#b1)"/>
<circle cx="79.5" cy="768.5" r="1.8" fill="rgb(25,25,25)" filter="url(#b1)"/>
<circle cx="243" cy="776" r="1.3" fill="rgb(165,165,165)" filter="url(#b1)"/>
<circle cx="268" cy="788.5" r="1.3" fill="rgb(153,153,153)" filter="url(#b1)"/>
<circle cx="328" cy="781.75" r="1.3" fill="rgb(165,165,165)" filter="url(#b1)"/>
<circle cx="363" cy="764.75" r="1.3" fill="rgb(165,165,165)" filter="url(#b1)"/>
<circle cx="181.75" cy="706.5" r="1.2" fill="rgb(178,178,178)" filter="url(#b1)"/>
<circle cx="209" cy="692.75" r="1.2" fill="rgb(178,178,178)" filter="url(#b1)"/>
<circle cx="241.75" cy="672.75" r="1.2" fill="rgb(178,178,178)" filter="url(#b1)"/>
<circle cx="361.75" cy="707.25" r="1.2" fill="rgb(178,178,178)" filter="url(#b1)"/>
<circle cx="481.75" cy="651.75" r="3.0" fill="rgb(0,0,0)" filter="url(#b1)"/>
<circle cx="715" cy="676" r="1.7" fill="rgb(25,25,25)" filter="url(#b1)"/>
<circle cx="497.5" cy="643.5" r="1.5" fill="rgb(140,140,140)" filter="url(#b1)"/>
<circle cx="468" cy="679" r="1.4" fill="rgb(102,102,102)" filter="url(#b1)"/>
<circle cx="705" cy="651" r="1.4" fill="rgb(127,127,127)" filter="url(#b1)"/>
<circle cx="695" cy="663.5" r="1.4" fill="rgb(127,127,127)" filter="url(#b1)"/>
<circle cx="578" cy="744.75" r="1.2" fill="rgb(165,165,165)" filter="url(#b1)"/>
<circle cx="971.25" cy="657.25" r="8.5" fill="#999" opacity="0.35" filter="url(#b3)"/>
<circle cx="971.25" cy="657.25" r="4.5" fill="rgb(0,0,0)" filter="url(#b1)"/>
<circle cx="823" cy="661.75" r="1.7" fill="rgb(25,25,25)" filter="url(#b1)"/>
<circle cx="756.75" cy="691.5" r="2.1" fill="rgb(0,0,0)" filter="url(#b1)"/>
<circle cx="748" cy="724" r="2.2" fill="rgb(0,0,0)" filter="url(#b1)"/>
<circle cx="849.75" cy="704.25" r="3.0" fill="rgb(0,0,0)" filter="url(#b1)"/>
<circle cx="925" cy="734.25" r="2.6" fill="rgb(0,0,0)" filter="url(#b1)"/>
<circle cx="979.75" cy="771.5" r="2.6" fill="rgb(0,0,0)" filter="url(#b1)"/>
<circle cx="790.5" cy="687.25" r="1.6" fill="rgb(140,140,140)" filter="url(#b1)"/>
<circle cx="809" cy="693.5" r="1.3" fill="rgb(153,153,153)" filter="url(#b1)"/>
<circle cx="883.75" cy="684" r="1.2" fill="rgb(165,165,165)" filter="url(#b1)"/>
<circle cx="1015.5" cy="654" r="1.2" fill="rgb(178,178,178)" filter="url(#b1)"/>
<circle cx="905.5" cy="794" r="1.2" fill="rgb(178,178,178)" filter="url(#b1)"/>
</svg>
<!--/GALAXY-->
<svg class="a" style="left:78px;top:161px" width="958" height="640"><rect x="0.75" y="0.75" width="956.5" height="638.5" fill="none" stroke="#0a0a30" stroke-width="1.5" stroke-dasharray="4 4"/></svg>



<!-- right palettes -->
<!-- palette 1 navigator -->
<div class="a" style="left:1066px;top:82px;width:212px;height:132px;background:#0a24b4"></div>
<div class="ptitle" style="left:1067px;top:83px;width:210px;height:17px"></div>
<div class="a" style="left:1069px;top:100px;width:206px;height:111px;background:#ece9d8"></div>
<div class="a" style="left:1069px;top:100px;width:206px;height:16px;background:#d4d0c8;border-bottom:1px solid #000"></div>
<svg class="a" style="left:1069px;top:100px" width="206" height="17" viewBox="1069 100 206 17">
<path d="M1173.5 116 V101.5 H1234 L1248 116.5" fill="#ece9d8" stroke="#000"/>
<path d="M1137.5 116 V101.5 H1171 L1185 116.5" fill="#ece9d8" stroke="#000"/>
<path d="M1073.5 116 V101.5 H1134 L1148 116.5" fill="#ece9d8" stroke="#000"/>
</svg>
<div class="a" style="left:1083px;top:102px;font-weight:bold;letter-spacing:-0.3px">Navigator</div><div class="a" style="left:1146px;top:102px">Info</div><div class="a" style="left:1182px;top:102px;letter-spacing:-0.3px">Histogram</div>
<div class="a" style="left:1075px;top:123px;width:195px;height:83px;border:1px solid #aca899;border-right-color:#444;border-bottom-color:#444"></div>
<svg class="a" style="left:1250px;top:129px" width="18" height="16"><path d="M9 1 L17 15 H1 Z" fill="#e4e4e4" stroke="#999"/><path d="M9 5v6M9 12.5v1.5" stroke="#111" stroke-width="1.6"/></svg>
<div class="xbtn" style="left:1246px;top:85px;width:13px;height:13px"><div class="a" style="left:3px;top:8px;width:6px;height:2px;background:#fff"></div></div>
<div class="xclose" style="left:1262px;top:85px;width:13px;height:13px"><svg class="a" style="left:1px;top:1px" width="10" height="10"><path d="M2 2L8 8M8 2L2 8" stroke="#fff" stroke-width="1.6"/></svg></div>
<div class="a" style="left:1258px;top:101px;width:14px;height:14px;border-radius:7px;background:radial-gradient(#fff,#dde4f4)"><div class="a" style="left:5px;top:3px;border-top:4px solid transparent;border-bottom:4px solid transparent;border-left:5px solid #1a3a8a"></div></div>

<!-- palette 2 color -->
<div class="a" style="left:1066px;top:214px;width:212px;height:62px;background:#0a24b4"></div>
<div class="ptitle" style="left:1067px;top:215px;width:210px;height:16px"></div>
<div class="a" style="left:1069px;top:231px;width:206px;height:43px;background:#ece9d8"></div>
<div class="a" style="left:1069px;top:231px;width:206px;height:16px;background:#d4d0c8"></div>
<div class="a" style="left:1069px;top:248px;width:206px;height:26px;background:#fff"></div>
<div class="a" style="left:1069px;top:248px;width:206px;height:1px;background:#888"></div>
<div class="a" style="left:1069px;top:253px;width:205px;height:18px;background:#000"></div>
<div class="a" style="left:1069px;top:254px;width:195px;height:15px;background:linear-gradient(#ff60b0,#ff0060 45%,#a00030 75%,#300008)"></div>
<div class="a" style="left:1264px;top:254px;width:8px;height:7px;background:#fff"></div>
<div class="xbtn" style="left:1246px;top:217px;width:13px;height:13px"><div class="a" style="left:2px;top:2px;width:7px;height:7px;border:1px solid #fff"></div></div>
<div class="xclose" style="left:1262px;top:217px;width:13px;height:13px"><svg class="a" style="left:1px;top:1px" width="10" height="10"><path d="M2 2L8 8M8 2L2 8" stroke="#fff" stroke-width="1.6"/></svg></div>
<div class="a" style="left:1258px;top:232px;width:14px;height:14px;border-radius:7px;background:radial-gradient(#fff,#dde4f4)"><div class="a" style="left:5px;top:3px;border-top:4px solid transparent;border-bottom:4px solid transparent;border-left:5px solid #1a3a8a"></div></div>

<!-- palette 3 history -->
<div class="a" style="left:1066px;top:276px;width:212px;height:343px;background:#0a24b4"></div>
<div class="ptitle" style="left:1067px;top:277px;width:210px;height:17px"></div>
<div class="a" style="left:1069px;top:294px;width:206px;height:322px;background:#ece9d8"></div>
<div class="a" style="left:1069px;top:294px;width:206px;height:16px;background:#d4d0c8;border-bottom:2px solid #000"></div>
<div class="a" style="left:1259px;top:312px;width:16px;height:290px;background:#fdfdfb"></div>
<div class="a" style="left:1261px;top:314px;width:12px;height:14px;background:#f0f0ea;border:1px solid #e4e4dc"><svg class="a" style="left:1px;top:3px" width="10" height="7"><path d="M1 6L5 2L9 6" stroke="#c8c8c0" stroke-width="1.8" fill="none"/></svg></div>
<div class="a" style="left:1261px;top:584px;width:12px;height:14px;background:#f0f0ea;border:1px solid #e4e4dc"><svg class="a" style="left:1px;top:3px" width="10" height="7"><path d="M1 1L5 5L9 1" stroke="#c8c8c0" stroke-width="1.8" fill="none"/></svg></div>
<div class="a" style="left:1069px;top:338px;width:190px;height:3px;background:#000"></div>
<div class="a" style="left:1069px;top:343px;width:190px;height:1px;background:#fff"></div>
<div class="a" style="left:1069px;top:363px;width:190px;height:1px;background:#fff"></div>
<div class="a" style="left:1069px;top:383px;width:190px;height:1px;background:#fff"></div>
<div class="a" style="left:1069px;top:403px;width:190px;height:1px;background:#fff"></div>
<div class="a" style="left:1069px;top:423px;width:190px;height:1px;background:#fff"></div>
<div class="a" style="left:1069px;top:443px;width:190px;height:1px;background:#fff"></div>
<div class="a" style="left:1091px;top:341px;width:1px;height:142px;background:#000"></div>
<div class="a" style="left:1073px;top:445px;width:16px;height:16px;border:1px solid #d8d4c4;border-right-color:#fff;border-bottom-color:#fff"></div>
<div class="a" style="left:1073px;top:465px;width:16px;height:16px;border:1px solid #d8d4c4;border-right-color:#fff;border-bottom-color:#fff"></div>
<div class="a" style="left:1092px;top:463px;width:167px;height:20px;background:#316ac5"></div>
<div class="a" style="left:1069px;top:483px;width:190px;height:1px;background:#000"></div>
<svg class="a" style="left:1099px;top:444px" width="20" height="40" viewBox="0 0 20 40">
<g><path d="M2.5 2.5h10v3h-10zM4.5 5.5h11v11h-11z" fill="#eee" stroke="#555"/><path d="M6 8h8M6 10.5h8M6 13h6" stroke="#333" stroke-width="1"/><path d="M13 13l5 4-5 1z" fill="#000"/></g>
<g transform="translate(0,20)"><path d="M2.5 2.5h10v3h-10zM4.5 5.5h11v11h-11z" fill="#eee" stroke="#555"/><path d="M6 8h8M6 10.5h8M6 13h6" stroke="#333" stroke-width="1"/><path d="M13 13l5 4-5 1z" fill="#000"/></g>
</svg>
<svg class="a" style="left:1088px;top:465px" width="12" height="16"><path d="M1 3h6l4 5-4 5h-6z" fill="#fff" stroke="#333"/></svg>
<div class="a" style="left:1126px;top:446px;font-size:11px">Invert</div>
<div class="a" style="left:1126px;top:466px;font-size:11px;font-weight:bold;color:#fff">Levels</div>
<div class="a" style="left:1069px;top:601px;width:206px;height:1px;background:#000"></div>
<div class="a" style="left:1260px;top:602px;width:1px;height:14px;background:#000"></div>
<svg class="a" style="left:1180px;top:603px" width="80" height="14">
<rect x="2.5" y="2.5" width="11" height="9" fill="#ddd" stroke="#333"/><rect x="4.5" y="5.5" width="7" height="4" fill="#fff" stroke="#333"/>
<rect x="32.5" y="3.5" width="14" height="8" fill="#ddd" stroke="#333"/><circle cx="40" cy="7.5" r="2.5" fill="#fff" stroke="#333"/><path d="M44 1v3M42.5 2.5h3" stroke="#333"/>
<path d="M63.5 4.5h8l-1 8h-6z" fill="#fff" stroke="#222"/><path d="M62 3.5h11M66 1.5h3" stroke="#222"/><path d="M66 6v5M68 6v5" stroke="#222"/>
</svg>
<div class="xbtn" style="left:1246px;top:279px;width:13px;height:13px"><div class="a" style="left:3px;top:8px;width:6px;height:2px;background:#fff"></div></div>
<div class="xclose" style="left:1262px;top:279px;width:13px;height:13px"><svg class="a" style="left:1px;top:1px" width="10" height="10"><path d="M2 2L8 8M8 2L2 8" stroke="#fff" stroke-width="1.6"/></svg></div>
<div class="a" style="left:1258px;top:295px;width:14px;height:14px;border-radius:7px;background:radial-gradient(#fff,#dde4f4)"><div class="a" style="left:5px;top:3px;border-top:4px solid transparent;border-bottom:4px solid transparent;border-left:5px solid #1a3a8a"></div></div>

<!-- palette 4 layers -->
<div class="a" style="left:1066px;top:618px;width:212px;height:254px;background:#0a24b4"></div>
<div class="ptitle" style="left:1067px;top:619px;width:210px;height:17px"></div>
<div class="a" style="left:1069px;top:636px;width:206px;height:233px;background:#ece9d8"></div>
<div class="a" style="left:1069px;top:636px;width:206px;height:16px;background:#d4d0c8;border-bottom:1px solid #000"></div>
<div class="xbtn" style="left:1246px;top:621px;width:13px;height:13px"><div class="a" style="left:3px;top:8px;width:6px;height:2px;background:#fff"></div></div>
<div class="xclose" style="left:1262px;top:621px;width:13px;height:13px"><svg class="a" style="left:1px;top:1px" width="10" height="10"><path d="M2 2L8 8M8 2L2 8" stroke="#fff" stroke-width="1.6"/></svg></div>
<div class="a" style="left:1258px;top:637px;width:14px;height:14px;border-radius:7px;background:radial-gradient(#fff,#dde4f4)"><div class="a" style="left:5px;top:3px;border-top:4px solid transparent;border-bottom:4px solid transparent;border-left:5px solid #1a3a8a"></div></div>
<svg class="a" style="left:1069px;top:636px" width="206" height="17" viewBox="1069 636 206 17">
<path d="M1182.5 651.5 V637.5 H1219 L1231 651.5" fill="#ece9d8" stroke="#000"/>
<path d="M1122.5 651.5 V637.5 H1177 L1189 651.5" fill="#ece9d8" stroke="#000"/>
<path d="M1069 651.5 H1275" stroke="#000"/>
<path d="M1072.5 652 V637.5 H1117 L1129.5 651.5 H1275" fill="#ece9d8" stroke="#000"/>
<rect x="1073" y="651" width="56" height="2" fill="#ece9d8"/>
</svg>
<div class="a" style="left:1080px;top:638px;font-weight:bold;letter-spacing:-0.4px">Layers</div>
<div class="a" style="left:1130px;top:638px;letter-spacing:-0.5px">Channels</div>
<div class="a" style="left:1190px;top:638px;letter-spacing:-0.4px">Paths</div>
<div class="a" style="left:1074px;top:657px;width:97px;height:16px;border:1px solid #d8d4c4;background:#fff"></div>
<div class="a" style="left:1154px;top:658px;width:16px;height:14px;background:#ece9d8;border:1px solid #f0ede2"><svg class="a" style="left:2px;top:3px" width="11" height="7"><path d="M1 1L5.5 5.5L10 1" stroke="#c8c4b8" stroke-width="1.8" fill="none"/></svg></div>
<div class="a" style="left:1076px;top:659px;color:#aca899">Normal</div>
<div class="a" style="left:1178px;top:659px;color:#aca899">Opacity:</div>
<div class="a" style="left:1222px;top:657px;width:49px;height:16px;border:1px solid #d8d4c4;color:#aca899;padding:1px 0 0 6px">100%</div>
<div class="a" style="left:1259px;top:660px;color:#c8c4b8;font-size:9px">&#8250;</div>
<div class="a" style="left:1069px;top:676px;width:206px;height:1px;background:#d8d4c4"></div>
<div class="a" style="left:1073px;top:682px;color:#aca899">Lock:</div>
<svg class="a" style="left:1104px;top:680px" width="72" height="16">
<rect x="2.5" y="2.5" width="10" height="10" fill="#f4f4f0" stroke="#b8b4a8"/><rect x="3" y="3" width="4.5" height="4.5" fill="#ddd"/><rect x="7.5" y="7.5" width="4.5" height="4.5" fill="#ddd"/>
<path d="M20 14 L31 3" stroke="#9c9890" stroke-width="2"/>
<path d="M47 2v12M41 8h12" stroke="#8a8678" stroke-width="1.5"/><path d="M47 1l-2 2h4zM47 15l-2-2h4zM40 8l2-2v4zM54 8l-2-2v4z" fill="#8a8678"/>
<path d="M63 6.5a3 3 0 0 1 6 0v2" stroke="#8a8678" fill="none" stroke-width="1.4"/><rect x="61.5" y="8" width="9" height="6" fill="#8a8678"/>
</svg>
<div class="a" style="left:1201px;top:682px;color:#aca899">Fill:</div>
<div class="a" style="left:1222px;top:680px;width:49px;height:16px;border:1px solid #d8d4c4;color:#aca899;padding:1px 0 0 6px">100%</div>
<div class="a" style="left:1259px;top:683px;color:#c8c4b8;font-size:9px">&#8250;</div>
<div class="a" style="left:1069px;top:701px;width:191px;height:1px;background:#000"></div>
<div class="a" style="left:1259px;top:702px;width:16px;height:152px;background:#fdfdfb"></div>
<div class="a" style="left:1261px;top:704px;width:12px;height:14px;background:#f0f0ea;border:1px solid #e4e4dc"><svg class="a" style="left:1px;top:3px" width="10" height="7"><path d="M1 6L5 2L9 6" stroke="#c8c8c0" stroke-width="1.8" fill="none"/></svg></div>
<div class="a" style="left:1261px;top:838px;width:12px;height:14px;background:#f0f0ea;border:1px solid #e4e4dc"><svg class="a" style="left:1px;top:3px" width="10" height="7"><path d="M1 1L5 5L9 1" stroke="#c8c8c0" stroke-width="1.8" fill="none"/></svg></div>
<div class="a" style="left:1113px;top:702px;width:1px;height:53px;background:#000"></div>
<div class="a" style="left:1114px;top:702px;width:146px;height:26px;background:#316ac5"></div>
<div class="a" style="left:1069px;top:755px;width:191px;height:1px;background:#000"></div>
<div class="a" style="left:1069px;top:728px;width:44px;height:1px;background:#fff"></div>
<div class="a" style="left:1091px;top:702px;width:1px;height:53px;background:#d8d4c4"></div>
<div class="a" style="left:1072px;top:705px;width:17px;height:19px;border:1px solid #d8d4c4;border-right-color:#fff;border-bottom-color:#fff"></div>
<div class="a" style="left:1072px;top:732px;width:17px;height:19px;border:1px solid #d8d4c4;border-right-color:#fff;border-bottom-color:#fff"></div>
<div class="a" style="left:1094px;top:732px;width:17px;height:19px;border:1px solid #d8d4c4;border-right-color:#fff;border-bottom-color:#fff"></div>
<svg class="a" style="left:1069px;top:702px" width="46" height="54">
<path d="M5 12 C8 8 16 8 19 12 C16 16 8 16 5 12Z" fill="#e4e0d0" stroke="#8a8678" stroke-width="1.2"/><circle cx="12" cy="12" r="2.6" fill="#8a8678"/>
<path d="M5 39 C8 35 16 35 19 39 C16 43 8 43 5 39Z" fill="#e4e0d0" stroke="#8a8678" stroke-width="1.2"/><circle cx="12" cy="39" r="2.6" fill="#8a8678"/>
<rect x="25.5" y="4.5" width="17" height="17" fill="#9a9a9a" stroke="#222"/><circle cx="34" cy="13" r="5" fill="#fff" stroke="#333"/>
</svg>
<svg class="a" style="left:1115px;top:703px" width="34" height="24">
<defs><radialGradient id="gth" cx="0.5" cy="0.5" r="0.5"><stop offset="0" stop-color="#fff"/><stop offset="0.2" stop-color="#ccc"/><stop offset="0.55" stop-color="#555"/><stop offset="1" stop-color="#222" stop-opacity="0"/></radialGradient></defs>
<rect width="34" height="24" fill="#161616"/><ellipse cx="17" cy="12.5" rx="13" ry="6.5" fill="url(#gth)" transform="rotate(-12 17 12)"/><g fill="#aaa"><circle cx="6" cy="8" r="0.6"/><circle cx="27" cy="15" r="0.6"/><circle cx="22" cy="4" r="0.5"/><circle cx="9" cy="18" r="0.5"/></g>
</svg>
<svg class="a" style="left:1115px;top:730px" width="34" height="24">
<rect width="34" height="24" fill="#161616"/><ellipse cx="17" cy="12.5" rx="13" ry="6.5" fill="url(#gth)" transform="rotate(-12 17 12)"/><g fill="#aaa"><circle cx="6" cy="8" r="0.6"/><circle cx="27" cy="15" r="0.6"/><circle cx="22" cy="4" r="0.5"/><circle cx="9" cy="18" r="0.5"/></g>
</svg>
<svg class="a" style="left:1151px;top:706px" width="10" height="18"><rect x="2.5" y="2.5" width="5" height="13" rx="2.5" fill="none" stroke="#fff" stroke-width="1.4"/><rect x="3" y="7" width="4" height="4" fill="#555"/></svg>
<div class="a" style="left:1162px;top:703px;width:34px;height:24px;border:1px solid #fff;background:#fff">
<svg class="a" style="left:1px;top:1px" width="30" height="20"><defs><radialGradient id="mth"><stop offset="0" stop-color="#000"/><stop offset="0.25" stop-color="#111"/><stop offset="0.6" stop-color="#999"/><stop offset="1" stop-color="#fff" stop-opacity="0"/></radialGradient></defs><ellipse cx="16" cy="10.5" rx="13" ry="6.5" fill="url(#mth)" transform="rotate(-12 16 10)"/><g fill="#666"><circle cx="5" cy="7" r="0.6"/><circle cx="27" cy="13" r="0.6"/><circle cx="22" cy="3" r="0.5"/></g></svg>
</div>
<div class="a" style="left:1162px;top:703px;width:34px;height:24px;border:1px solid #fff;outline:1px solid #316ac5"></div>
<div class="a" style="left:1198px;top:707px;font-weight:bold;color:#fff">Laye...</div>
<div class="a" style="left:1152px;top:735px;font-style:italic">Background</div>
<svg class="a" style="left:1246px;top:734px" width="12" height="14"><path d="M3 6.5a3 3 0 0 1 6 0v1" stroke="#333" fill="none" stroke-width="1.2"/><rect x="1.5" y="7" width="9" height="6" fill="#e8e8e0" stroke="#333"/></svg>
<div class="a" style="left:1069px;top:854px;width:206px;height:1px;background:#000"></div>
<div class="a" style="left:1260px;top:855px;width:1px;height:14px;background:#000"></div>
<svg class="a" style="left:1096px;top:855px" width="160" height="14">
<circle cx="8" cy="7" r="5.5" fill="#333" stroke="#111"/><path d="M6 11 C7 6 8 4 11 3" stroke="#fff" stroke-width="1.2" fill="none"/><path d="M5.5 7h4" stroke="#fff"/><path d="M12 12h3l-1.5 1.5z" fill="#000"/>
<rect x="28.5" y="1.5" width="12" height="11" fill="#999" stroke="#222"/><circle cx="34.5" cy="7" r="3.5" fill="#fff" stroke="#222"/>
<path d="M56.5 3.5h4l1 1h6v7h-11z" fill="#e8e8e4" stroke="#333"/>
<circle cx="94" cy="7" r="5.5" fill="#fff" stroke="#222"/><path d="M90 11 L98 3 A5.5 5.5 0 0 0 90 11Z" fill="#333"/><path d="M98 12h3l-1.5 1.5z" fill="#000"/>
<rect x="119.5" y="2.5" width="9" height="9" fill="#fff" stroke="#333"/><rect x="122.5" y="5.5" width="6" height="6" fill="#fff" stroke="#111"/>
<path d="M146.5 4.5h8l-1 8h-6z" fill="#fff" stroke="#222"/><path d="M145 3.5h11M149 1.5h3" stroke="#222"/><path d="M149 6v5M151 6v5" stroke="#222"/>
</svg>


<!-- Gaussian blur dialog -->
<div class="a" style="left:920px;top:106px;width:322px;height:333px;background:#0a22a8;border-radius:7px 7px 0 0"></div>
<div class="a" style="left:920px;top:106px;width:322px;height:29px;border-radius:7px 7px 0 0;background:linear-gradient(#3d95ff 0,#0a62f5 3px,#0058ee 10px,#0054e8 22px,#0046d8 29px)"></div>
<div class="a" style="left:923px;top:135px;width:316px;height:302px;background:#ece9d8"></div>
<div class="a" style="left:927px;top:115px;font-weight:bold;font-size:13px;color:#fff;letter-spacing:-0.2px;text-shadow:1px 1px #0a2a8a">Gaussian Blur</div>
<div class="xclose" style="left:1216px;top:111px;width:21px;height:21px"><svg class="a" style="left:2px;top:2px" width="16" height="16"><path d="M3.5 3.5L12.5 12.5M12.5 3.5L3.5 12.5" stroke="#fff" stroke-width="2"/></svg></div>
<div class="a" style="left:933px;top:145px;width:208px;height:208px;background:radial-gradient(ellipse 40px 18px at 40px 18px,#1a1a1a,#000)"></div>
<div class="btn" style="left:1157px;top:146px;width:71px;height:18px;line-height:17px;font-size:12px;letter-spacing:0;border-color:#003c74;box-shadow:inset 0 0 0 1px #9db9eb, inset 0 -2px 0 1px #5a7edc">OK</div>
<div class="btn" style="left:1157px;top:174px;width:71px;height:18px;line-height:17px;font-size:12px;letter-spacing:0">Cancel</div>
<div class="a" style="left:1157px;top:207px;width:13px;height:13px;border:1px solid #1c5180;background:linear-gradient(135deg,#dcdcd7,#fff)"><svg class="a" style="left:1px;top:1px" width="10" height="10"><path d="M1.5 4.5L4 7L8.5 2" stroke="#21a121" stroke-width="2" fill="none"/></svg></div>
<div class="a" style="left:1172px;top:207px;font-size:12px">Preview</div>
<div class="a" style="left:990px;top:358px;width:13px;height:13px;border:1px solid #3c5a84;border-radius:2px;background:linear-gradient(#fff,#dde2ec)"><div class="a" style="left:3px;top:5px;width:5px;height:1px;background:#000"></div></div>
<div class="a" style="left:1071px;top:358px;width:13px;height:13px;border:1px solid #3c5a84;border-radius:2px;background:linear-gradient(#fff,#dde2ec)"><div class="a" style="left:3px;top:5px;width:5px;height:1px;background:#000"></div><div class="a" style="left:5px;top:3px;width:1px;height:5px;background:#000"></div></div>
<div class="a" style="left:1024px;top:358px;font-size:10px">100%</div>
<div class="a" style="left:1014px;top:392px;font-size:12px">Radius:</div>
<div class="a" style="left:1057px;top:388px;width:56px;height:22px;border:1px solid #7f9db9;background:#fff"></div>
<div class="a" style="left:1064px;top:392px;font-size:12px">2</div>
<div class="a" style="left:1072px;top:392px;width:1px;height:14px;background:#000"></div>
<div class="a" style="left:1116px;top:392px;font-size:12px">pixels</div>
<div class="a" style="left:938px;top:419px;width:171px;height:3px;border-top:1px solid #aca899;border-bottom:1px solid #fff;background:#dcdacb"></div>
<svg class="a" style="left:950px;top:413px" width="13" height="14"><path d="M1.5 5.5L6.5 1L11.5 5.5V12.5H1.5Z" fill="#f8f8f4" stroke="#8a9aa8"/><path d="M2 12.5h9" stroke="#21a121" stroke-width="2"/></svg>

<svg class="a" style="left:1262px;top:603px" width="12" height="12"><g fill="#b4b0a0"><rect x="8" y="2" width="2" height="2"/><rect x="5" y="5" width="2" height="2"/><rect x="8" y="5" width="2" height="2"/><rect x="2" y="8" width="2" height="2"/><rect x="5" y="8" width="2" height="2"/><rect x="8" y="8" width="2" height="2"/></g></svg>
<svg class="a" style="left:1262px;top:856px" width="12" height="12"><g fill="#b4b0a0"><rect x="8" y="2" width="2" height="2"/><rect x="5" y="5" width="2" height="2"/><rect x="8" y="5" width="2" height="2"/><rect x="2" y="8" width="2" height="2"/><rect x="5" y="8" width="2" height="2"/><rect x="8" y="8" width="2" height="2"/></g></svg>
<!-- toolbox -->
<div class="a" style="left:2px;top:81px;width:64px;height:442px;background:#0a24b4"></div>
<div class="a" style="left:3px;top:82px;width:62px;height:16px;background:linear-gradient(#3c8cff 0,#0b5ff5 3px,#0055ea 10px,#0048d8 16px)"></div>
<div class="a" style="left:5px;top:98px;width:58px;height:422px;background:#ece9d8"></div>
<div class="a" style="left:5px;top:98px;width:58px;height:24px;background:#fff;border-bottom:1px solid #b8b5a8"></div>
<svg class="a" style="left:5px;top:98px" width="58" height="24" viewBox="0 0 58 24">
<defs><linearGradient id="fth" x1="0" y1="1" x2="1" y2="0"><stop offset="0" stop-color="#6a6a6a"/><stop offset="0.5" stop-color="#8a8a8a"/><stop offset="1" stop-color="#5a5a5a"/></linearGradient></defs>
<path d="M11 16.5 L22 15.5 C26 8 36 2 55 1.5 C57 2 56.5 3.5 55 5 C52 9 48 12 42 15 L44 16 C38 19 30 22 24 22.5 C21 22.5 20 21 21.5 19 L11 17.5 Z" fill="url(#fth)"/>
<path d="M22 18 C30 14 40 8 54 3" stroke="#ddd" stroke-width="0.6" fill="none"/>
<path d="M26 20 L30 12M30 19 L35 10M34 18 L40 8M38 16 L45 6M43 14 L50 4M24 21 L26 15" stroke="#4a4a4a" stroke-width="0.8" opacity="0.7"/>
</svg>
<div class="a" style="left:7px;top:193px;width:54px;height:1px;background:#c9c5b3"></div>
<div class="a" style="left:7px;top:286px;width:54px;height:1px;background:#c9c5b3"></div>
<div class="a" style="left:7px;top:335px;width:54px;height:1px;background:#c9c5b3"></div>
<div class="a" style="left:7px;top:384px;width:54px;height:1px;background:#c9c5b3"></div>
<div class="a" style="left:7px;top:439px;width:54px;height:1px;background:#c9c5b3"></div>
<div class="a" style="left:7px;top:468px;width:54px;height:1px;background:#c9c5b3"></div>
<div class="a" style="left:7px;top:492px;width:54px;height:1px;background:#c9c5b3"></div>
<svg class="a" style="left:0;top:81px" width="66" height="442" viewBox="0 81 66 442" fill="none" stroke="#000">
<!-- corner triangles -->
<g fill="#000" stroke="none">
<path d="M31 141h-4l4-4z"/><path d="M31 164h-4l4-4z"/><path d="M57 186h-4l4-4z"/>
<path d="M31 214h-4l4-4z"/><path d="M57 214h-4l4-4z"/><path d="M31 236h-4l4-4z"/><path d="M57 236h-4l4-4z"/>
<path d="M31 258h-4l4-4z"/><path d="M57 258h-4l4-4z"/><path d="M31 281h-4l4-4z"/><path d="M57 281h-4l4-4z"/>
<path d="M31 307h-4l4-4z"/><path d="M57 307h-4l4-4z"/><path d="M31 330h-4l4-4z"/><path d="M57 330h-4l4-4z"/>
<path d="M31 357h-4l4-4z"/><path d="M57 357h-4l4-4z"/>
</g>
<!-- marquee -->
<rect x="13.5" y="129.5" width="14" height="13" stroke-dasharray="3 2" stroke-width="1.2"/>
<!-- move -->
<path d="M38.5 128.5 L38.5 138 L41 136 L45.5 134.5 Z" fill="#333" stroke="#111" stroke-width="0.8"/>
<path d="M50.5 134v10M45 139.5h11" stroke-width="1.2"/><path d="M50.5 132.5l-2.5 2.5h5zM50.5 145.5l-2.5-2.5h5zM44 139.5l2.5-2.5v5zM57 139.5l-2.5-2.5v5z" fill="#000" stroke="none"/>
<!-- lasso -->
<path d="M13 150 L20 155 L27 149 L27 160 L17 164 Z M17 158 c-2 2 0 4 2 2" stroke-width="1.2" stroke="#444"/>
<!-- wand -->
<path d="M43 154 L54 165" stroke-width="2"/><path d="M39 154h8M43 150v8M40 151l6 6M46 151l-6 6" stroke-width="0.8" stroke="#333"/>
<!-- crop -->
<path d="M17 172v14h12M13 176h12v12M17 186l8-9M26 174l3-2" stroke-width="2"/>
<!-- slice -->
<path d="M39 186 L54 173 L55 176 L44 185 Z" fill="#888" stroke="#222"/><path d="M44 177l6 5" stroke-width="2"/>
<!-- healing -->
<path d="M14 213 L26 199 C28 197 31 200 29 202 L17 216 C15 218 12 215 14 213Z" fill="#aaa" stroke="#444" stroke-width="1.2"/>
<!-- brush -->
<path d="M40 214 C42 210 45 208 47 209 L56 199 L57 200 L48 211 C47 214 43 215 40 214Z" fill="#777" stroke="#222"/>
<!-- stamp -->
<circle cx="20" cy="223" r="2.5" fill="#777" stroke="#333"/><path d="M20 226v4M14 230h12v7h-12z" stroke="#333" stroke-width="1.2" fill="#eee"/><path d="M17 233h6l-3 3z" fill="#222" stroke="none"/>
<!-- history brush -->
<path d="M40 236 C42 232 45 230 47 231 L56 221 L57 222 L48 233 C47 236 43 237 40 236Z" fill="#777" stroke="#222"/><path d="M42 227 c2-4 6-4 8-2" stroke-dasharray="1 1"/>
<!-- eraser -->
<path d="M13 256 L20 248 L29 248 L22 256 Z" fill="#fff" stroke="#222" stroke-width="1.2"/><path d="M13 256v2h9l7-8v-2" stroke="#222" fill="#ccc"/>
<!-- gradient -->
<defs><linearGradient id="grd"><stop offset="0" stop-color="#fff"/><stop offset="1" stop-color="#000"/></linearGradient></defs>
<rect x="39.5" y="245.5" width="15" height="11" fill="url(#grd)" stroke="#111"/>
<!-- smudge -->
<path d="M15 280 L20 273 C18 270 20 266 25 266 C28 267 29 272 27 276 L20 277 L16 281Z" fill="#ddd" stroke="#333"/>
<!-- sponge -->
<path d="M38 273 C38 268 45 266 52 268 C56 270 56 276 52 279 L42 279 C39 278 38 276 38 273Z" fill="#eee" stroke="#333"/><circle cx="43" cy="274" r="2.5" stroke="#333"/>
<!-- path select -->
<path d="M16 293 L16 306 L19 303 L21 307 L23 306 L21 302 L25 302 Z" fill="#111" stroke="none"/>
<!-- type -->
<text x="47" y="307" font-family="Liberation Serif" font-weight="bold" font-size="17" fill="#111" stroke="none" text-anchor="middle">T</text>
<!-- pen -->
<path d="M20 313 L24 322 L22 326 L18 326 L16 322 Z" fill="#fff" stroke="#111" stroke-width="1.2"/><path d="M20 317v5M17 326v3M23 326v3" stroke-width="1.2"/>
<!-- rect -->
<defs><linearGradient id="rg" x1="0" y1="0" x2="1" y2="1"><stop offset="0" stop-color="#fff"/><stop offset="1" stop-color="#888"/></linearGradient></defs>
<rect x="40.5" y="316.5" width="13" height="11" fill="url(#rg)" stroke="#222"/>
<!-- notes -->
<path d="M14.5 341.5 h13 v10 l-4 4 h-9 z" fill="#f4f4f0" stroke="#333"/><path d="M17 345h8M17 347.5h8M17 350h6" stroke="#444" stroke-width="0.8"/>
<!-- eyedropper -->
<path d="M40 356 L50 345" stroke="#222" stroke-width="2"/><path d="M49 343 L54 338 L56 340 L51 345 Z" fill="#222" stroke="none"/><path d="M47 342l5 5" stroke-width="1.5"/>
<!-- hand selected -->
<rect x="9.5" y="361.5" width="24" height="19" rx="3" fill="#f8f8f4" stroke="#9aa" />
<path d="M15 372 L14 366 C14 365 16 365 16 366 L17 370 L17 364 C17 363 19 363 19 364 L20 370 L20 363 C20 362 22 362 22 363 L23 370 L24 365 C24 364 26 364 26 365 L26 373 C26 377 24 379 21 379 L19 379 C17 379 16 377 15 375 L13 371 C12 369 14 369 15 371 Z" fill="#fff" stroke="#222" stroke-width="0.9"/>
<!-- zoom -->
<circle cx="45" cy="366" r="4.5" fill="#ddd" stroke="#222" stroke-width="1.2"/><path d="M48 369 L54 375" stroke-width="2"/>
<!-- fg bg -->
<rect x="24.5" y="404.5" width="28" height="28" fill="#000" stroke="#000"/><rect x="25.5" y="405.5" width="26" height="26" fill="#000" stroke="#fff"/>
<rect x="12.5" y="392.5" width="27" height="27" fill="#fff" stroke="#000"/>
<path d="M45 392 c4 0 7 3 7 7" stroke-width="1.2"/><path d="M44 390v5l-2-2.5z" fill="#000"/><path d="M50 399h4l-2 2z" fill="#000"/>
<rect x="14.5" y="427.5" width="5" height="5" fill="#000" stroke="#000"/><rect x="11.5" y="424.5" width="5" height="5" fill="#fff" stroke="#000"/>
<!-- quick mask -->
<rect x="9.5" y="444.5" width="23" height="20" rx="3" fill="#f4f4ee" stroke="#b9c0c0"/>
<rect x="12.5" y="447.5" width="18" height="14" fill="#fff" stroke="#111"/><circle cx="21" cy="454.5" r="4.5" fill="#eee" stroke="#222"/>
<rect x="36.5" y="447.5" width="18" height="14" fill="#888" stroke="#111"/><circle cx="45.5" cy="454.5" r="4.5" fill="#fff" stroke="#222"/>
<!-- screen modes -->
<rect x="9.5" y="473.5" width="14" height="15" rx="2" fill="#f4f4ee" stroke="#b9c0c0"/>
<rect x="12.5" y="476.5" width="9" height="9" fill="#aaa" stroke="#222"/>
<rect x="28.5" y="475.5" width="10" height="10" fill="#bbb" stroke="#333"/><path d="M28 476.5h11" stroke="#000" stroke-width="2"/>
<rect x="44.5" y="475.5" width="10" height="10" fill="#aaa" stroke="#333"/>
<!-- jump -->
<path d="M15 502h12l3 3v9h-15z" fill="#fff" stroke="#111"/><path d="M12 502h9" stroke="#333" stroke-width="3"/>
<path d="M22 512 c0-5 4-7 9-7 v-3 l5 5 l-5 5 v-3 c-4 0-7 1-9 3z" fill="#ccc" stroke="#111"/>
<rect x="40.5" y="500.5" width="14" height="14" fill="#f4f4f4" stroke="#bbb"/><path d="M42 507 l4 5 l8 -11" stroke="#555" stroke-width="3"/>
</svg>

</body></html>
